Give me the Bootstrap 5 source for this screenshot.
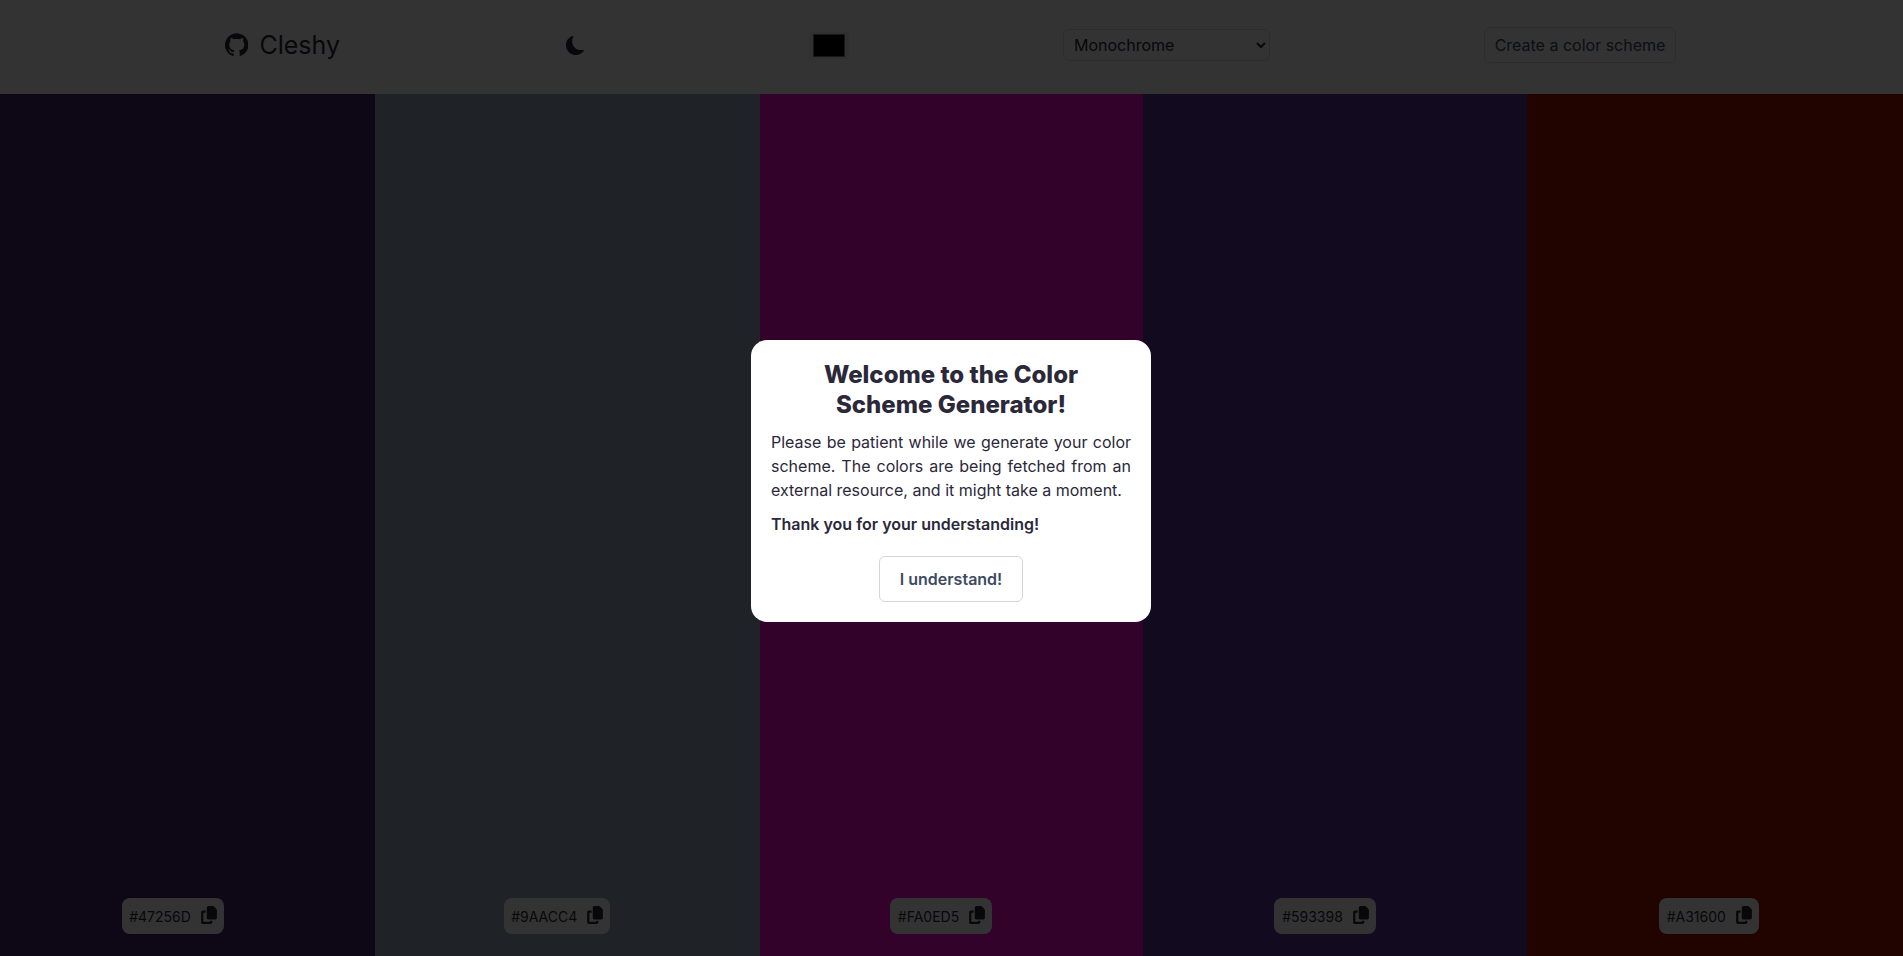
<!DOCTYPE html>
<html lang="en">
<head>
  <meta charset="UTF-8">
  <meta name="viewport" content="width=device-width, initial-scale=1">
  <title>Color Scheme Generator</title>
  <link href="https://cdn.jsdelivr.net/npm/bootstrap@5.3.0/dist/css/bootstrap.min.css" rel="stylesheet">
  <style>
    body { font-family: Inter, "Liberation Sans", sans-serif; color: #2b283a; height: 956px; overflow: hidden; background: #fff; }
    .top-bar { height: 94px; padding: 0 0 4px 225px; }
    .brand-wrap { width: 115px; gap: 11px; }
    .brand-name { font-size: 25px; margin-top: 2px; color: #2b283a; }
    .brand-logo { width: 24px; height: 24px; fill: #2b283a; }
    .moon-icon { width: 19px; height: 19px; margin-left: 226px; fill: #2b283a; }
    .swatch { width: 40px; height: 27px; margin-left: 224px; padding: 2px 4px; background: #f0f0f0; border-radius: 2px; }
    .swatch-fill { width: 100%; height: 100%; background: #000; border: 1px solid #767676; }
    .scheme-select { width: 207px; height: 32px; margin-left: 214px; padding: 0 0 0 6px; appearance: auto; background-image: none; font-size: 16px; color: #2b283a; border: 1px solid #ddd; border-radius: 6px; }
    .generate-btn { width: 192px; height: 36px; margin-left: 214px; padding: 0; font-size: 16px; color: #3d4b60; border: 1px solid #ddd; border-radius: 6px; background: #fff; }
    .swatch-row { height: 862px; display: grid; grid-template-columns: 375px 384.5px 383px 384px 376.5px; }
    .swatch-col { padding-bottom: 22px; }
    .swatch-col:nth-child(1) { padding-right: 29px; }
    .swatch-col:nth-child(2) { padding-right: 20px; }
    .swatch-col:nth-child(3) { padding-right: 20px; }
    .swatch-col:nth-child(4) { padding-right: 19px; }
    .swatch-col:nth-child(5) { padding-right: 12px; }
    .hex-chip { height: 36px; padding: 0 7px; gap: 10px; font-size: 14px; color: #2b283a; background: #fff; border-radius: 8px; }
    .swatch-col:nth-child(n+3) .hex-chip { padding-left: 8px; }
    .copy-icon { width: 16px; height: 18px; fill: #2b283a; margin-top: -3px; }
    .dim-layer { position: fixed; inset: 0; padding: 6px 1px 0 0; background: rgba(0, 0, 0, .8); }
    .welcome-box { width: 400px; padding: 20px; background: #fff; border-radius: 16px; color: #2b283a; }
    .welcome-box h2 { font-size: 24px; line-height: 30px; font-weight: 800; margin: 0 30px 10px; }
    .welcome-box p { font-size: 16px; line-height: 24px; margin-bottom: 10px; }
    .welcome-copy { text-align: justify; }
    .welcome-btn { width: 144px; height: 46px; margin-top: 10px; padding: 0; font-size: 16px; font-weight: 600; color: #3d4b60; background: #fff; border: 1px solid #d5d4d8; border-radius: 6px; }
  </style>
</head>
<body>
  <nav class="top-bar d-flex align-items-center">
    <div class="brand-wrap d-flex align-items-center flex-shrink-0">
      <svg class="brand-logo" viewBox="0 0 16 16"><path d="M8 0C3.58 0 0 3.58 0 8c0 3.54 2.29 6.53 5.47 7.59.4.07.55-.17.55-.38 0-.19-.01-.82-.01-1.49-2.01.37-2.53-.49-2.69-.94-.09-.23-.48-.94-.82-1.13-.28-.15-.68-.52-.01-.53.63-.01 1.08.58 1.23.82.72 1.21 1.87.87 2.33.66.07-.52.28-.87.51-1.07-1.78-.2-3.64-.89-3.64-3.95 0-.87.31-1.59.82-2.15-.08-.2-.36-1.02.08-2.12 0 0 .67-.21 2.2.82.64-.18 1.32-.27 2-.27.68 0 1.36.09 2 .27 1.53-1.04 2.2-.82 2.2-.82.44 1.1.16 1.92.08 2.12.51.56.82 1.27.82 2.15 0 3.07-1.87 3.75-3.65 3.95.29.25.54.73.54 1.48 0 1.07-.01 1.93-.01 2.2 0 .21.15.46.55.38A8.012 8.012 0 0 0 16 8c0-4.42-3.58-8-8-8z"/></svg>
      <span class="brand-name">Cleshy</span>
    </div>
    <svg class="moon-icon flex-shrink-0" viewBox="0 0 16 16"><path d="M6 .278a.768.768 0 0 1 .08.858 7.208 7.208 0 0 0-.878 3.46c0 4.021 3.278 7.277 7.318 7.277.527 0 1.04-.055 1.533-.16a.787.787 0 0 1 .81.316.733.733 0 0 1-.031.893A8.349 8.349 0 0 1 8.344 16C3.734 16 0 12.286 0 7.71 0 4.266 2.114 1.312 5.124.06A.752.752 0 0 1 6 .278z"/></svg>
    <div class="swatch flex-shrink-0"><div class="swatch-fill"></div></div>
    <select class="form-select scheme-select flex-shrink-0">
      <option>Monochrome</option>
    </select>
    <button class="btn generate-btn flex-shrink-0" type="button">Create a color scheme</button>
  </nav>

  <main class="swatch-row">
    <div class="swatch-col d-flex align-items-end justify-content-center" style="background:#47256D">
      <div class="hex-chip d-flex align-items-center"><span>#47256D</span><svg class="copy-icon" viewBox="0 0 448 512"><use href="#copy-path"/></svg></div>
    </div>
    <div class="swatch-col d-flex align-items-end justify-content-center" style="background:#9AACC4">
      <div class="hex-chip d-flex align-items-center"><span>#9AACC4</span><svg class="copy-icon" viewBox="0 0 448 512"><use href="#copy-path"/></svg></div>
    </div>
    <div class="swatch-col d-flex align-items-end justify-content-center" style="background:#FA0ED5">
      <div class="hex-chip d-flex align-items-center"><span>#FA0ED5</span><svg class="copy-icon" viewBox="0 0 448 512"><use href="#copy-path"/></svg></div>
    </div>
    <div class="swatch-col d-flex align-items-end justify-content-center" style="background:#593398">
      <div class="hex-chip d-flex align-items-center"><span>#593398</span><svg class="copy-icon" viewBox="0 0 448 512"><use href="#copy-path"/></svg></div>
    </div>
    <div class="swatch-col d-flex align-items-end justify-content-center" style="background:#A31600">
      <div class="hex-chip d-flex align-items-center"><span>#A31600</span><svg class="copy-icon" viewBox="0 0 448 512"><use href="#copy-path"/></svg></div>
    </div>
  </main>

  <svg class="d-none"><defs><path id="copy-path" d="M208 0H332.1c12.7 0 24.9 5.1 33.9 14.1l67.9 67.9c9 9 14.1 21.2 14.1 33.9V336c0 26.5-21.5 48-48 48H208c-26.5 0-48-21.5-48-48V48c0-26.5 21.5-48 48-48zM48 128h80v64H64V448H256V416h64v48c0 26.5-21.5 48-48 48H48c-26.5 0-48-21.5-48-48V176c0-26.5 21.5-48 48-48z"/></defs></svg>

  <!-- welcome popup over everything -->
  <div class="dim-layer d-flex align-items-center justify-content-center">
    <div class="welcome-box">
      <h2 class="text-center">Welcome to the Color Scheme Generator!</h2>
      <p class="welcome-copy">Please be patient while we generate your color scheme. The colors are being fetched from an external resource, and it might take a moment.</p>
      <p class="fw-semibold">Thank you for your understanding!</p>
      <div class="text-center"><button class="btn welcome-btn" type="button">I understand!</button></div>
    </div>
  </div>

  <script src="https://cdn.jsdelivr.net/npm/bootstrap@5.3.0/dist/js/bootstrap.bundle.min.js"></script>
</body>
</html>
